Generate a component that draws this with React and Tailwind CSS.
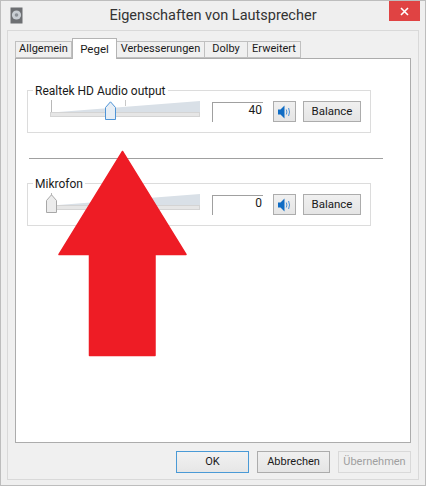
const font = { fontFamily: 'Roboto,"Open Sans",sans-serif' };

function Tab({ label, active, w }) {
  return active ? (
    <div className={`${w} h-[21px] -mb-px z-10 relative bg-white border border-[#b4b4b4] border-b-0 flex items-start justify-center pt-[2px] text-[11.5px] text-[#1a1a1a]`}>{label}</div>
  ) : (
    <div className={`${w} h-[17px] bg-[#f0f0f0] border border-[#c0c0c0] border-l-0 first:border-l flex items-center justify-center text-[11px] text-[#1a1a1a]`}>{label}</div>
  );
}

function Speaker() {
  return (
    <svg width="14" height="14" viewBox="0 0 14 14">
      <path d="M0 4.5h2.5L6.5 .5v13l-4-4H0z" fill="#0f6cc4" />
      <path d="M8.3 4.5q1.2 2.5 0 5M10.6 3q1.8 4 0 8" fill="none" stroke="#4a90d6" strokeWidth="1" />
    </svg>
  );
}

function Btn({ children, className = "" }) {
  return (
    <div className={`h-[21px] pt-px flex items-center justify-center border border-[#acacac] bg-gradient-to-b from-[#f0f0f0] to-[#e5e5e5] text-[11px] text-[#1a1a1a] ${className}`}>{children}</div>
  );
}

function Slider({ thumb, active }) {
  return (
    <div className="relative w-[152px] h-[24px]">
      <div className="absolute left-[1px] top-0 w-px h-[12px] bg-[#b8b8b8]" />
      <div className="absolute left-[75px] top-0 w-px h-[6px] bg-[#c8c8c8]" />
      <svg className="absolute left-0 top-0" width="152" height="18" viewBox="0 0 152 18">
        <path d="M2 12.5L150 1v11.5z" fill="#d9e0e7" />
        <rect x="0.5" y="12.5" width="149" height="4" fill="#e6e6e6" stroke="#d4d4d4" />
      </svg>
      <svg className="absolute top-[1px]" style={{ left: thumb }} width="11" height="19" viewBox="0 0 11 19">
        <path d="M.5 18.5V6.5L5.5 .8l5 5.7v12z" fill={active ? "#e7eef5" : "#ececec"} stroke={active ? "#4f94d6" : "#a8a8a8"} />
      </svg>
    </div>
  );
}

function Group({ label, value, thumb, active }) {
  return (
    <div className="relative h-[43px] border border-[#dcdcdc] ml-[11px] w-[344px] flex">
      <div className="absolute left-[5px] -top-[8px] bg-white px-[2px] h-[16px] flex items-center text-[12px] text-[#1a1a1a] whitespace-nowrap">{label}</div>
      <div className="ml-[22px] mt-[9px]"><Slider thumb={thumb} active={active} /></div>
      <div className="ml-[10px] mt-[11px] w-[51px] h-[20px] border-t border-l border-[#a0a0a0] flex justify-end items-start pr-[1px] text-[12px] text-[#1a1a1a] leading-[14px]">{value}</div>
      <Btn className="ml-[10px] mt-[10px] w-[23px]"><Speaker /></Btn>
      <Btn className="ml-[7px] mt-[10px] w-[58px] !text-[11.5px]">Balance</Btn>
    </div>
  );
}

export default function App() {
  return (
    <div style={font} className="relative w-[426px] h-[486px] bg-[#efefef] border border-[#bdbdbd] overflow-hidden flex flex-col">
      <div className="h-[29px] shrink-0 relative flex items-center justify-center text-[14.5px] text-[#333]">
        <svg className="absolute left-[9px] top-[6px]" width="13" height="17" viewBox="0 0 13 17">
          <rect x="0.5" y="0.5" width="12" height="16" fill="#6d6f72" />
          <circle cx="6.5" cy="8" r="4.6" fill="#c9ced3" />
          <circle cx="6.5" cy="8" r="1.8" fill="#8b9096" />
        </svg>
        <span className="mt-[1px]">Eigenschaften von Lautsprecher</span>
        <div className="absolute right-[5px] top-0 w-[31px] h-[20px] bg-[#e04343] flex items-center justify-center">
          <svg width="9" height="9" viewBox="0 0 9 9"><path d="M1 1l7 7M8 1L1 8" stroke="#fff" strokeWidth="1.6" /></svg>
        </div>
      </div>
      <div className="ml-[6px] mr-[6px] h-[450px] bg-[#f0f0f0] border border-[#d9d9d9] pl-[7px] pt-[7px] pr-[7px] flex flex-col">
        <div className="flex items-end h-[20px]">
          <Tab w="w-[57px]" label="Allgemein" />
          <Tab w="w-[45px]" label="Pegel" active />
          <Tab w="w-[88px]" label="Verbesserungen" />
          <Tab w="w-[43px]" label="Dolby" />
          <Tab w="w-[53px]" label="Erweitert" />
        </div>
        <div className="w-[396px] h-[385px] bg-white border border-[#acacac] pt-[31px]">
          <Group label="Realtek HD Audio output" value="40" thumb="55px" active />
          <div className="ml-[13px] mt-[25px] w-[354px] h-px bg-[#a0a0a0]" />
          <div className="mt-[24px]">
            <Group label="Mikrofon" value="0" thumb="-4px" />
          </div>
        </div>
        <div className="flex justify-end gap-[8px] mt-[8px]">
          <Btn className="w-[73px] !h-[22px] !border-[#4a9ad6] from-[#f2f2f2] to-[#e6e6e6]">OK</Btn>
          <Btn className="w-[73px] !h-[22px]">Abbrechen</Btn>
          <div className="w-[73px] h-[22px] pt-px flex items-center justify-center border border-[#d9d9d9] bg-[#efefef] text-[11px] text-[#a0a0a0]">Übernehmen</div>
        </div>
      </div>
      <svg className="absolute left-[57px] top-[149px]" width="130" height="207" viewBox="0 0 130 207">
        <path d="M64.5 1.5L1 104.5H31.5V205.5H97V104.5H128z" fill="#ee1c25" stroke="#ee1c25" strokeWidth="1.5" strokeLinejoin="round" />
      </svg>
    </div>
  );
}
